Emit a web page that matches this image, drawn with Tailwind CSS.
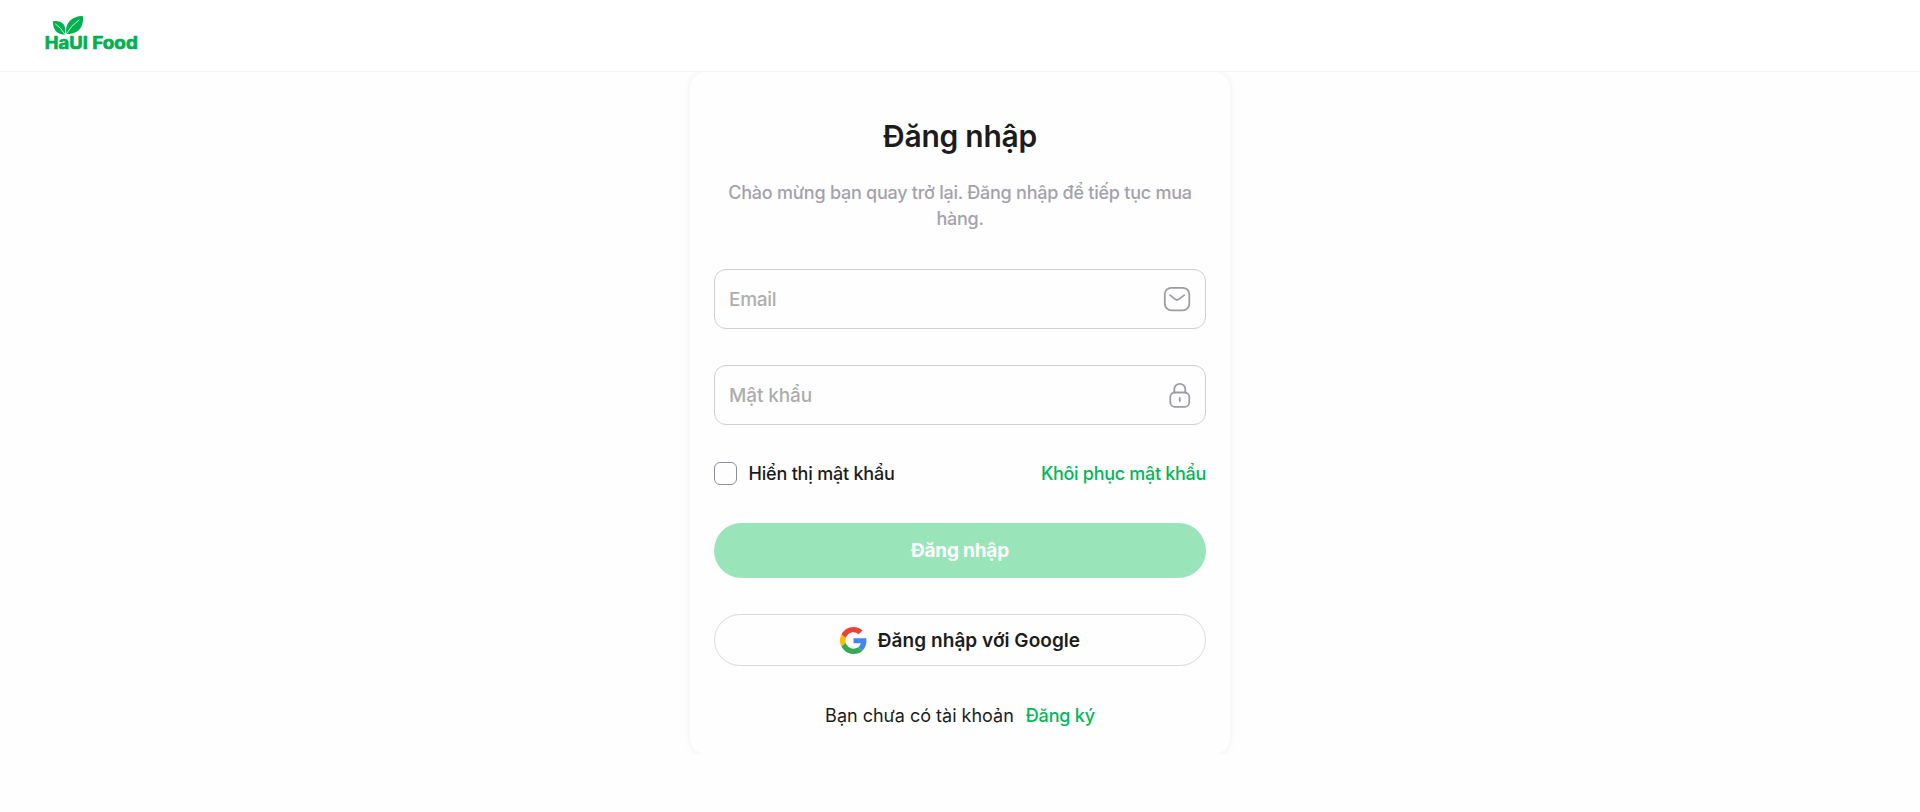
<!DOCTYPE html>
<html lang="vi">
<head>
<meta charset="utf-8">
<title>Đăng nhập</title>
<script src="https://cdn.jsdelivr.net/npm/@tailwindcss/browser@4"></script>
</head>
<body class="min-h-screen bg-[#fefefe] font-['Inter',sans-serif] text-[#1c1c1c]">
<header class="flex h-[72px] items-start border-b border-[#f3f3f3] bg-white pl-[40px] pt-[10px]">
  <svg class="h-[45px] w-[105px] text-[#00b14f]" viewBox="40 10 105 45" fill="currentColor" role="img">
    <path d="M53 21.2C59 20.2 64.8 23 65.2 28.5C65.4 31 65.1 33 64.8 34.6C58 34.6 52.6 30.5 53 21.2Z"/>
    <path d="M82.8 16C84 24.500 80.500 34.500 66.300 34C64.500 24 71 16 82.800 16Z"/>
    <path d="M55.500 24Q61 27.500 64.800 34.200M79 20Q71 25.500 66.200 34" fill="none" stroke="#fff" stroke-width=".8" stroke-linecap="round"/>
    <g class="font-bold" font-size="16.800" stroke="currentColor" stroke-width=".7" stroke-linejoin="round">
      <text x="44.800" y="48.700" textLength="43" lengthAdjust="spacingAndGlyphs">HaUI</text>
      <text x="92.300" y="48.700" textLength="45.500" lengthAdjust="spacingAndGlyphs">Food</text>
    </g>
  </svg>
</header>
<main class="flex h-[682px] justify-center overflow-hidden">
  <section class="h-full w-[540px] rounded-2xl bg-[#fefefe] px-6 shadow-[0_0_8px_rgba(0,0,0,0.07)]">
    <h1 class="mt-[42px] text-center text-[30px] leading-[45px] font-semibold tracking-[-0.25px]">Đăng nhập</h1>
    <p class="mt-[21px] text-center text-[18px] leading-[26px] font-medium tracking-[-0.25px] text-[#a3a1ad]">Chào mừng bạn quay trở lại. Đăng nhập để tiếp tục mua<br>hàng.</p>
    <form class="mt-[37px]">
      <label class="flex h-[60px] items-center justify-between rounded-xl border border-[#cfcfcf] px-[14px]">
        <span class="pt-0.5 text-[19px] leading-6 font-medium tracking-[-0.3px] text-[#adadad]">Email</span>
        <svg class="size-[28px]" viewBox="0 0 28 28" fill="none" stroke="#9d9ba9" stroke-width="1.8" stroke-linecap="round" stroke-linejoin="round"><rect x="1.800" y="2.800" width="24.500" height="22.500" rx="6.500"/><path d="M7 10.100L12 14.100Q14 15.500 16 14.100L21.300 10.100"/></svg>
      </label>
      <label class="mt-[36px] flex h-[60px] items-center justify-between rounded-xl border border-[#cfcfcf] px-[14px]">
        <span class="pt-0.5 text-[19px] leading-6 font-medium tracking-[-0.1px] text-[#adadad]">Mật khẩu</span>
        <svg class="size-[28px]" viewBox="0 0 28 28" fill="none" stroke="#9d9ba9" stroke-width="1.8" stroke-linecap="round" stroke-linejoin="round"><rect x="7.300" y="11.500" width="19" height="14.300" rx="4.500"/><path d="M11.300 11.500V8.300a5.500 5.500 0 0 1 11 0V11.500M16.800 17v3"/></svg>
      </label>
      <div class="mt-[36px] flex h-[25px] items-center text-[18px] leading-[25px] font-medium">
        <span class="size-[23px] rounded-[6px] border border-[#8f8d9c]"></span>
        <span class="ml-[11.500px] tracking-[-0.2px]">Hiển thị mật khẩu</span>
        <span class="ml-auto tracking-[-0.3px] text-[#00b958]">Khôi phục mật khẩu</span>
      </div>
      <button type="button" class="mt-[37px] flex h-[55px] w-full items-center justify-center rounded-full bg-[#99e5b9] pt-0.5 text-[19px] font-bold tracking-[-0.2px] text-white">Đăng nhập</button>
      <button type="button" class="mt-[36px] flex h-[52px] w-full items-center justify-center gap-[11px] rounded-full border border-[#dcdcdc] text-[19px] font-semibold tracking-[0.05px]">
        <svg class="size-[27px]" viewBox="0 0 48 48"><path fill="#EA4335" d="M24 9.500c3.540 0 6.710 1.220 9.210 3.600l6.850-6.850C35.900 2.380 30.470 0 24 0 14.620 0 6.510 5.380 2.560 13.220l7.980 6.190C12.430 13.720 17.740 9.500 24 9.500z"/><path fill="#4285F4" d="M46.980 24.550c0-1.570-.15-3.090-.38-4.550H24v9.020h12.940c-.58 2.960-2.260 5.480-4.780 7.180l7.730 6c4.510-4.180 7.090-10.360 7.090-17.650z"/><path fill="#FBBC05" d="M10.530 28.590c-.48-1.450-.76-2.990-.76-4.590s.27-3.140.76-4.590l-7.980-6.190C.92 16.460 0 20.120 0 24c0 3.880.92 7.540 2.560 10.780l7.970-6.190z"/><path fill="#34A853" d="M24 48c6.480 0 11.930-2.130 15.890-5.810l-7.730-6c-2.150 1.450-4.920 2.300-8.160 2.300-6.260 0-11.570-4.220-13.470-9.910l-7.980 6.190C6.510 42.620 14.620 48 24 48z"/></svg>
        <span class="pt-0.5">Đăng nhập với Google</span>
      </button>
    </form>
    <p class="mt-[36px] flex justify-center gap-[12px] text-[18px] leading-[28px]"><span>Bạn chưa có tài khoản</span><a class="font-medium tracking-[-0.2px] text-[#00b958]">Đăng ký</a></p>
  </section>
</main>
</body>
</html>
